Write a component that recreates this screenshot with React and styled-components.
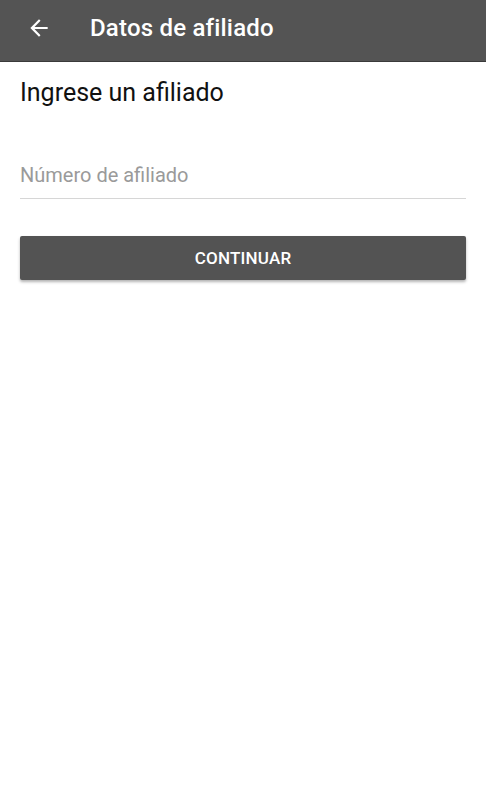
import styled, { createGlobalStyle } from 'styled-components';

const Global = createGlobalStyle`
  html, body {
    margin: 0;
    padding: 0;
    background: #ffffff;
    font-family: Roboto, 'Noto Sans', sans-serif;
  }
  * { box-sizing: border-box; }
`;

export default function App() {
  return (
    <>
      <Global />
      <Page>
        <Toolbar>
          <BackButton aria-label="Volver">
            <svg width="24" height="24" viewBox="0 0 24 24">
              <path d="M20 11H7.83l5.59-5.59L12 4l-8 8 8 8 1.41-1.41L7.83 13H20v-2z" fill="#ffffff" />
            </svg>
          </BackButton>
          <Title>Datos de afiliado</Title>
        </Toolbar>
        <Content>
          <Heading>Ingrese un afiliado</Heading>
          <Field>
            <Input placeholder="Número de afiliado" />
          </Field>
          <Button>CONTINUAR</Button>
        </Content>
      </Page>
    </>
  );
}

const Page = styled.div`
  min-height: 800px;
  background: #ffffff;
`;

const Toolbar = styled.header`
  height: 62px;
  background-color: #545454;
  display: flex;
  align-items: center;
  padding-left: 26px;
  border-bottom: 1px solid #3a3a3a;
`;

const BackButton = styled.button`
  background: none;
  border: none;
  padding: 0;
  width: 26px;
  height: 26px;
  display: flex;
  align-items: center;
  justify-content: center;
  margin-top: -6px;
  svg { width: 26px; height: 26px; }
`;

const Title = styled.h1`
  margin: -6px 0 0 38px;
  font-family: Roboto, sans-serif;
  font-weight: 500;
  font-size: 24px;
  letter-spacing: 0.2px;
  color: #ffffff;
`;

const Content = styled.main`
  padding: 16px 20px 0 20px;
  display: flex;
  flex-direction: column;
`;

const Heading = styled.h2`
  margin: 0;
  font-family: Roboto, sans-serif;
  font-weight: 400;
  font-size: 25px;
  line-height: 30px;
  color: #111111;
`;

const Field = styled.div`
  margin-top: 54px;
  border-bottom: 1px solid #d6d6d6;
`;

const Input = styled.input`
  width: 100%;
  border: none;
  outline: none;
  padding: 0 0 10px 0;
  font-family: Roboto, sans-serif;
  font-size: 20px;
  line-height: 26px;
  color: #222;
  background: transparent;
  &::placeholder { color: #9a9a9a; }
`;

const Button = styled.button`
  margin-top: 37px;
  height: 44px;
  width: 100%;
  border: none;
  border-radius: 2px;
  background-color: #535353;
  color: #ffffff;
  font-family: Roboto, sans-serif;
  font-weight: 500;
  font-size: 17px;
  letter-spacing: 0.2px;
  box-shadow: 0 2px 3px rgba(0, 0, 0, 0.3);
`;
